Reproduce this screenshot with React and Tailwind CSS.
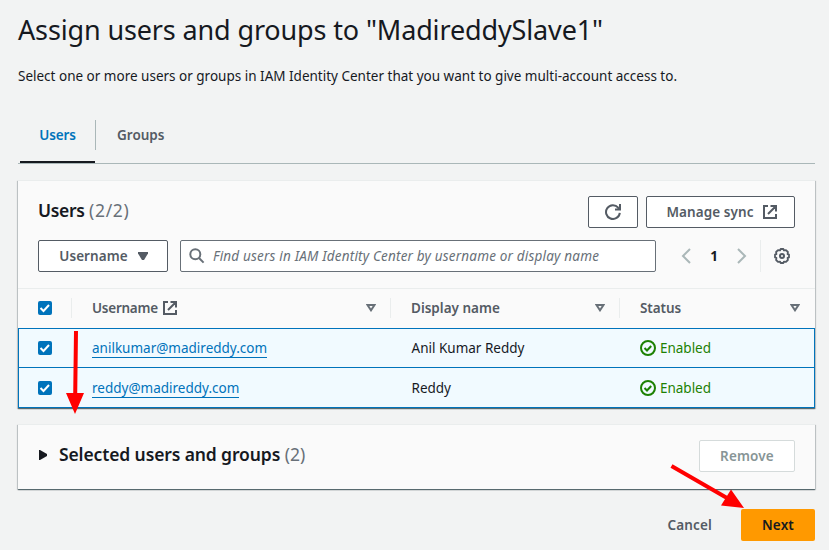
import React from "react";

function External({ className = "" }) {
  return (
    <svg viewBox="0 0 16 16" className={"size-4 shrink-0 fill-none stroke-[#545b64] stroke-2 " + className}>
      <path d="M6 2H2v12h12v-4M8.500 2H14v5.500M6 10l8-8" />
    </svg>
  );
}

function Check() {
  return (
    <span className="flex size-3.5 shrink-0 rounded-xs bg-[#0073bb]">
      <svg viewBox="0 0 14 14" className="size-3.5 fill-none stroke-white stroke-2">
        <path d="M2.5 7l3 3 5.5-6" />
      </svg>
    </span>
  );
}

function SortIcon() {
  return (
    <svg viewBox="0 0 10 8" className="h-2 w-2.5 shrink-0 fill-none stroke-[#687078] stroke-2">
      <path d="M1.5 1h7L5 6.3z" />
    </svg>
  );
}

const GRID = "grid grid-cols-[54px_319px_229px_195px]";

function Row({ email, name, last }) {
  return (
    <div className={GRID + " h-10 items-center bg-[#f1faff] border-x border-b border-[#0073bb] " + (last ? "pt-px" : "border-t")}>
      <div className="pl-[19px]"><Check /></div>
      <div className="flex pl-[19px]">
        <span className="h-5 border-b border-[#0073bb] leading-5 text-[#0073bb]">{email}</span>
      </div>
      <div className="pl-[19.5px]">{name}</div>
      <div className="flex items-center gap-1 pl-[19px] text-[#1d8102]">
        <svg viewBox="0 0 16 16" className="size-4 fill-none stroke-[#1d8102] stroke-2">
          <circle cx="8" cy="8" r="7" />
          <path d="M4.5 8l2.5 2.5L11.2 6" />
        </svg>
        <span className="tracking-[-0.02px]">Enabled</span>
      </div>
    </div>
  );
}

const BTN = "flex h-8 shrink-0 items-center justify-center rounded-xs border border-[#545b64] bg-white font-semibold tracking-[0.08px] text-[#545b64]";
const PANEL = "border-t border-[#eaeded] bg-[#fafafa] shadow-[0_1px_1px_0_rgba(0,28,36,0.5),1px_1px_1px_0_rgba(0,28,36,0.15),-1px_1px_1px_0_rgba(0,28,36,0.15)]";

export default function App() {
  return (
    <main className="relative h-[550px] w-[829px] overflow-hidden bg-[#f2f3f3] pl-[18px] pr-3.5 pt-3 font-['Noto_Sans','Open_Sans',sans-serif] text-[13.5px] leading-5 text-[#16191f] whitespace-nowrap">
      <h1 className="h-9 text-[27px] leading-9"><span className="tracking-[-0.14px]">Assign users and groups to "MadireddySlave1"</span></h1>
      <p className="mt-[18px] h-5">Select one or more users or groups in IAM Identity Center that you want to give multi-account access to.</p>

      <nav className="mt-[34px] flex h-11 border-b border-[#aab7b8] font-semibold text-[#545b64]">
        <div className="ml-0.5 flex w-[75px] justify-center border-b-2 border-[#16191f] pt-[5px] tracking-[-0.15px] text-[#0073bb]"><span>Users</span></div>
        <div className="h-[30px] border-l border-[#aab7b8] pl-[21px] pt-[5px]"><span>Groups</span></div>
      </nav>

      <section className={PANEL + " mt-4 h-[228px]"}>
        <div className="flex h-[47px] items-end pl-5 pr-5">
          <h2 className="mb-1.5 grow text-[17.5px] leading-6"><span className="font-semibold tracking-[-0.35px]">Users</span> <span className="tracking-[0.7px] text-[#687078]">(2/2)</span></h2>
          <div className={BTN + " w-[50px]"}>
            <svg viewBox="0 0 16 16" className="size-4 fill-none stroke-[#545b64] stroke-2">
              <path d="M14.8 8.8A6.9 6.9 0 1 1 13.2 3.6L14.5 5M15 0v5.5H10" />
            </svg>
          </div>
          <div className={BTN + " ml-2 w-[149px] gap-2 pl-[3px]"}><span>Manage sync</span><External /></div>
        </div>
        <div className="mt-3 flex h-8 items-center pl-5 pr-5">
          <div className={BTN + " w-[130px] gap-2.5 pl-px"}>
            <span>Username</span>
            <svg viewBox="0 0 10 8" className="h-2 w-2.5 fill-[#545b64]"><path d="M0 0h10v1.500L6 8H4L0 1.500z" /></svg>
          </div>
          <div className="ml-3 flex h-8 w-[476px] items-center rounded-xs border border-[#687078] bg-white pl-2 italic text-[#687078]">
            <svg viewBox="0 0 16 16" className="mr-2 size-4 shrink-0 fill-none stroke-[#687078] stroke-2">
              <circle cx="6.3" cy="6.3" r="5" /><path d="M10 10l4.6 4.6" />
            </svg>
            <span className="tracking-[0.19px]">Find users in IAM Identity Center by username or display name</span>
          </div>
          <svg viewBox="0 0 16 16" className="ml-[22px] size-4 fill-none stroke-[#aab7b8] stroke-2"><path d="M12 1L5 8l7 7" /></svg>
          <b className="w-10 text-center">1</b>
          <svg viewBox="0 0 16 16" className="size-4 fill-none stroke-[#aab7b8] stroke-2"><path d="M4 1l7 7-7 7" /></svg>
          <div className="ml-2.5 flex h-8 items-center border-l border-[#eaeded] pl-[13px]">
            <svg viewBox="0 0 16 16" className="size-4 fill-none stroke-[#545b64] stroke-2">
              <circle cx="8" cy="8" r="2" />
              <path strokeWidth="1.8" strokeLinejoin="round" d="M6.6 1h2.8l.5 1.4L12 2.1l1.9 1.9-.3 2.1 1.4.5v2.8l-1.4.5.3 2.1-1.9 1.9-2.1-.3-.5 1.4H6.6l-.5-1.4-2.1.3-1.9-1.9.3-2.1L1 9.4V6.6l1.4-.5L2.1 4 4 2.1l2.1.3z" />
            </svg>
          </div>
        </div>

        <div className={GRID + " mt-4 h-10 items-center border-t border-[#eaeded] pb-px font-semibold text-[#545b64]"}>
          <div className="flex h-5 items-center border-r border-[#eaeded] pl-5"><Check /></div>
          <div className="flex h-5 items-center border-r border-[#eaeded] pl-5 pr-3.5">
            <span className="tracking-[-0.25px]">Username</span><External className="ml-1" /><span className="grow" /><SortIcon />
          </div>
          <div className="flex h-5 items-center border-r border-[#eaeded] pl-5 pr-3.5">
            <span className="grow">Display name</span><SortIcon />
          </div>
          <div className="flex h-5 items-center pl-5 pr-[15px]">
            <span className="grow tracking-[-0.1px]">Status</span><SortIcon />
          </div>
        </div>
        <Row email="anilkumar@madireddy.com" name="Anil Kumar Reddy" />
        <Row email="reddy@madireddy.com" name="Reddy" last />
      </section>

      <section className={PANEL + " mt-4 flex h-[65px] items-center pb-0.5 pl-5 pr-5"}>
        <svg viewBox="0 0 10 10" className="mb-0.5 mr-[11px] size-2.5 fill-[#16191f]"><path d="M1 0h1l7 4v2l-7 4H1z" /></svg>
        <h2 className="mb-1 grow text-[17.5px] leading-6"><span className="font-semibold tracking-[-0.12px]">Selected users and groups</span> <span className="text-[#687078]">(2)</span></h2>
        <div className="flex h-8 w-24 items-center justify-center rounded-xs border border-[#d5dbdb] bg-white font-semibold tracking-[0.15px] text-[#879596]"><span>Remove</span></div>
      </section>

      <footer className="mt-5 flex h-8 items-center justify-end font-semibold tracking-[0.15px]">
        <span className="mr-[29px] text-[#545b64]">Cancel</span>
        <div className="flex h-8 w-[74px] items-center justify-center rounded-xs bg-[#ff9900]"><span>Next</span></div>
      </footer>

      <svg viewBox="0 0 829 550" className="pointer-events-none absolute inset-0 h-[550px] w-[829px] fill-[#ff0000] stroke-[#ff0000]">
        <path strokeWidth="4" d="M76 331L75.2 395M671.5 466L727 498" />
        <path stroke="none" d="M66 393h18l-9 21zM731 489.500L744 508l-23-2.500z" />
      </svg>
    </main>
  );
}
